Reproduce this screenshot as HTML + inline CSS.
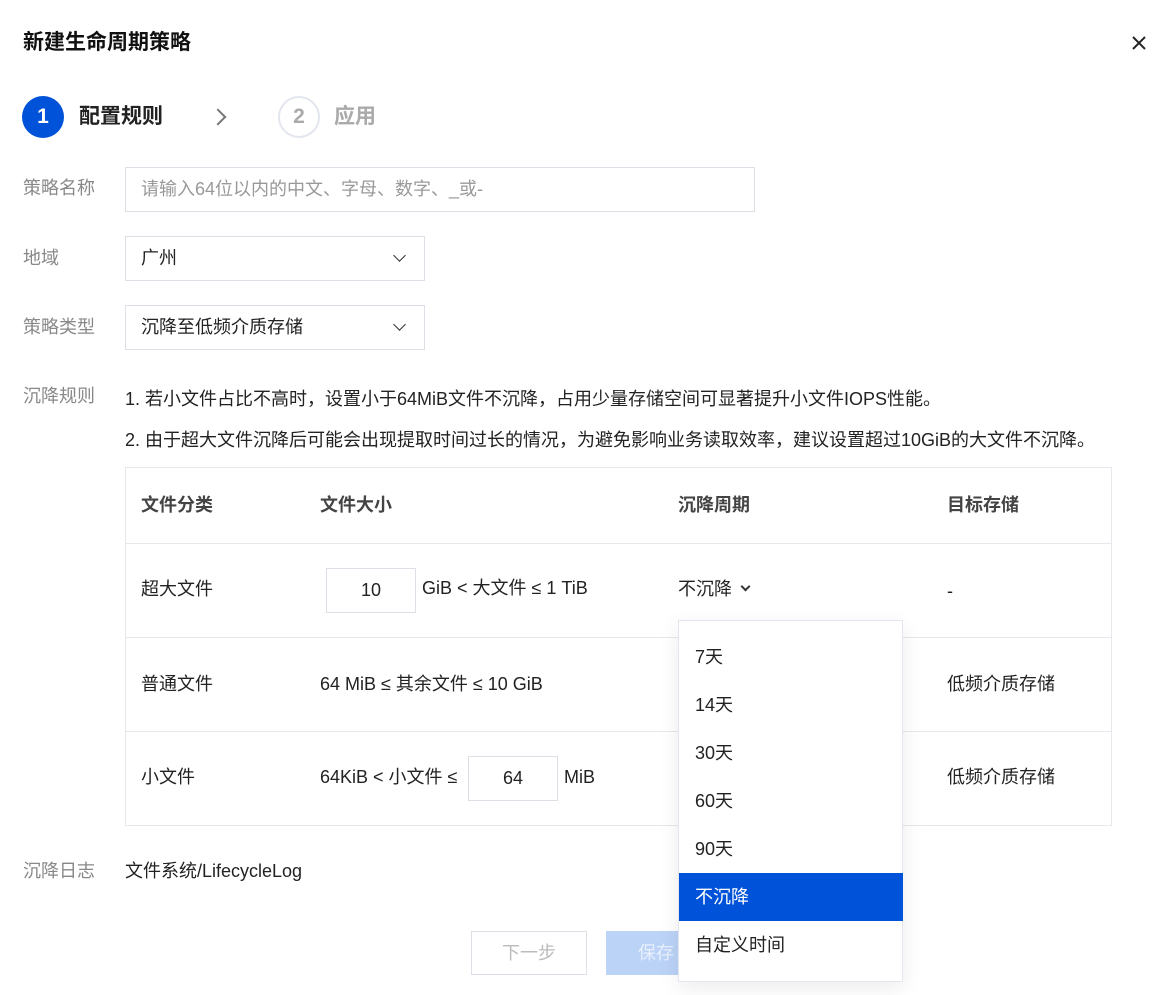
<!DOCTYPE html>
<html><head><meta charset="utf-8"><style>
*{margin:0;padding:0;box-sizing:border-box}
body{width:1166px;height:995px;background:#fff;position:relative;overflow:hidden;font-family:"Liberation Sans","Noto Sans CJK SC",sans-serif;font-size:18px;color:#222}
.a{position:absolute;white-space:nowrap;line-height:24px}
.lbl{color:#888;left:23px}
.box{position:absolute;border:1px solid #dcdfe6;background:#fff}
.chev{position:absolute;width:9px;height:9px;border-right:1.8px solid #333;border-bottom:1.8px solid #333;transform:rotate(45deg)}
.th{font-weight:bold;color:#444}
.hl{position:absolute;left:125px;width:986px;height:1px;background:#e6e8ee}
.it{position:absolute;left:0;width:224px;height:48px;line-height:48px;padding-left:16px}
</style></head><body>
<div class="a" style="left:23px;top:31px;font-size:21px;font-weight:bold;color:#111">新建生命周期策略</div>
<div class="a" style="left:1131px;top:31px;width:16px;height:24px">
<svg width="16" height="24"><path d="M2 6 L14 18 M14 6 L2 18" stroke="#222" stroke-width="2"/></svg></div>

<div class="a" style="left:22px;top:96px;width:42px;height:42px;border-radius:50%;background:#0052d9;color:#fff;font-size:21px;font-weight:bold;text-align:center;line-height:42px">1</div>
<div class="a" style="left:79px;top:105px;font-size:21px;font-weight:bold;color:#222">配置规则</div>
<div class="a" style="left:212px;top:111px;width:12px;height:12px;border-right:2.5px solid #777;border-top:2.5px solid #777;transform:rotate(45deg)"></div>
<div class="a" style="left:278px;top:96px;width:42px;height:42px;border-radius:50%;border:2px solid #e3e6ee;color:#aaa;font-size:21px;font-weight:bold;text-align:center;line-height:38px">2</div>
<div class="a" style="left:334px;top:105px;font-size:21px;font-weight:bold;color:#aaa">应用</div>

<div class="a lbl" style="top:176px">策略名称</div>
<div class="box" style="left:125px;top:167px;width:630px;height:45px"></div>
<div class="a" style="left:141px;top:177px;color:#999">请输入64位以内的中文、字母、数字、_或-</div>

<div class="a lbl" style="top:246px">地域</div>
<div class="box" style="left:125px;top:236px;width:300px;height:45px"></div>
<div class="a" style="left:141px;top:246px">广州</div>
<div class="chev" style="left:395px;top:251px"></div>

<div class="a lbl" style="top:315px">策略类型</div>
<div class="box" style="left:125px;top:305px;width:300px;height:45px"></div>
<div class="a" style="left:141px;top:315px">沉降至低频介质存储</div>
<div class="chev" style="left:395px;top:320px"></div>

<div class="a lbl" style="top:384px">沉降规则</div>
<div class="a" style="left:125px;top:387px">1. 若小文件占比不高时，设置小于64MiB文件不沉降，占用少量存储空间可显著提升小文件IOPS性能。</div>
<div class="a" style="left:125px;top:428px">2. 由于超大文件沉降后可能会出现提取时间过长的情况，为避免影响业务读取效率，建议设置超过10GiB的大文件不沉降。</div>

<div class="box" style="left:125px;top:467px;width:987px;height:359px;border-color:#e6e8ee"></div>
<div class="hl" style="top:543px"></div>
<div class="hl" style="top:637px"></div>
<div class="hl" style="top:731px"></div>
<div class="a th" style="left:141px;top:493px">文件分类</div>
<div class="a th" style="left:320px;top:493px">文件大小</div>
<div class="a th" style="left:678px;top:493px">沉降周期</div>
<div class="a th" style="left:947px;top:493px">目标存储</div>

<div class="a" style="left:141px;top:577px">超大文件</div>
<div class="box" style="left:326px;top:568px;width:90px;height:45px"></div>
<div class="a" style="left:326px;top:578px;width:90px;text-align:center">10</div>
<div class="a" style="left:422px;top:576px">GiB &lt; 大文件 ≤ 1 TiB</div>
<div class="a" style="left:678px;top:577px">不沉降</div>
<div class="a" style="left:742px;top:583px;width:7px;height:7px;border-right:2px solid #333;border-bottom:2px solid #333;transform:rotate(45deg)"></div>
<div class="a" style="left:947px;top:579px">-</div>

<div class="a" style="left:141px;top:672px">普通文件</div>
<div class="a" style="left:320px;top:672px">64 MiB ≤ 其余文件 ≤ 10 GiB</div>
<div class="a" style="left:947px;top:672px">低频介质存储</div>

<div class="a" style="left:141px;top:765px">小文件</div>
<div class="a" style="left:320px;top:765px">64KiB &lt; 小文件 ≤</div>
<div class="box" style="left:468px;top:756px;width:90px;height:45px"></div>
<div class="a" style="left:468px;top:766px;width:90px;text-align:center">64</div>
<div class="a" style="left:564px;top:765px">MiB</div>
<div class="a" style="left:947px;top:765px">低频介质存储</div>

<div class="a lbl" style="top:859px">沉降日志</div>
<div class="a" style="left:125px;top:859px">文件系统/LifecycleLog</div>

<div class="box" style="left:471px;top:931px;width:116px;height:44px"></div>
<div class="a" style="left:471px;top:941px;width:116px;text-align:center;color:#bbb">下一步</div>
<div class="a" style="left:606px;top:931px;width:116px;height:44px;background:#bbd3f7"></div>
<div class="a" style="left:606px;top:941px;width:100px;text-align:center;color:#e8f0fd">保存</div>

<div class="a" style="left:678px;top:620px;width:225px;height:362px;background:#fff;border:1px solid #e3e6ee;box-shadow:0 6px 20px rgba(0,0,0,.08)">
<div class="it" style="top:12px">7天</div>
<div class="it" style="top:60px">14天</div>
<div class="it" style="top:108px">30天</div>
<div class="it" style="top:156px">60天</div>
<div class="it" style="top:204px">90天</div>
<div class="it" style="top:252px;background:#0052d9;color:#fff">不沉降</div>
<div class="it" style="top:300px">自定义时间</div>
</div>
</body></html>
